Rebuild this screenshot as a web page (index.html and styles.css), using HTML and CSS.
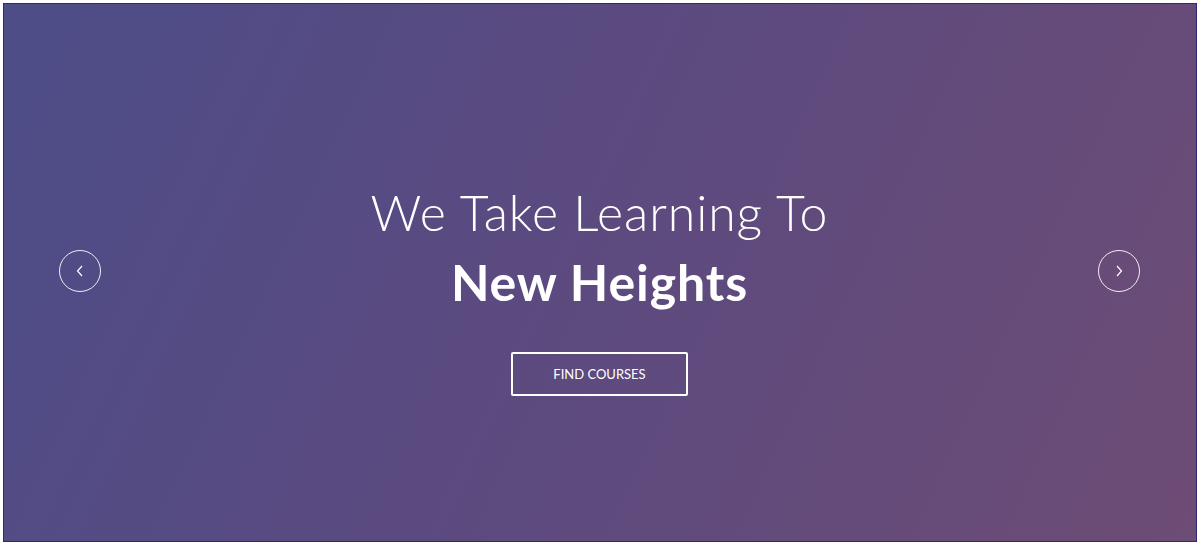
FILE: index.html
```html
<!DOCTYPE html>
<html lang="en">
<head>
<meta charset="utf-8">
<title>We Take Learning To New Heights</title>
<link rel="stylesheet" href="styles.css">
</head>
<body>
<section class="hero">
  <button class="arrow arrow-prev" aria-label="Previous">
    <svg width="10" height="12" viewBox="0 0 10 12"><path d="M7 1 L2.5 6 L7 11" fill="none" stroke="#fff" stroke-width="1.2"/></svg>
  </button>
  <div class="content">
    <h1 class="title"><span class="light">We Take Learning To</span><span class="bold">New Heights</span></h1>
    <a class="btn" href="#">FIND COURSES</a>
  </div>
  <button class="arrow arrow-next" aria-label="Next">
    <svg width="10" height="12" viewBox="0 0 10 12"><path d="M3 1 L7.5 6 L3 11" fill="none" stroke="#fff" stroke-width="1.2"/></svg>
  </button>
</section>
</body>
</html>
```
FILE: styles.css
```css
html, body {
  margin: 0;
  padding: 0;
  background: #fff;
}
body {
  padding: 3px 3px 4px 3px;
  font-family: "Lato", "Noto Sans", sans-serif;
}
.hero {
  box-sizing: border-box;
  height: 539px;
  border: 1px solid rgba(20, 10, 90, 0.55);
  background: linear-gradient(115deg, #4d4d88 0%, #5b4a80 45%, #6d4c75 100%);
  display: flex;
  align-items: center;
  justify-content: space-between;
  padding: 0 56px 0 55px;
}
.arrow {
  width: 42px;
  height: 42px;
  border-radius: 50%;
  border: 1px solid rgba(255, 255, 255, 0.9);
  background: transparent;
  display: flex;
  align-items: center;
  justify-content: center;
  padding: 0;
  margin-bottom: 3px;
  cursor: pointer;
}
.content {
  display: flex;
  flex-direction: column;
  align-items: center;
  margin-top: 27px;
}
.title {
  margin: 0;
  color: #fff;
  font-size: 50px;
  line-height: 70px;
  letter-spacing: 0.9px;
  text-align: center;
  display: flex;
  flex-direction: column;
}
.light {
  font-weight: 300;
}
.bold {
  font-weight: 700;
}
.btn {
  margin-top: 35px;
  box-sizing: border-box;
  width: 177px;
  height: 44px;
  border: 2px solid #fff;
  border-radius: 2px;
  color: #fff;
  text-decoration: none;
  font-size: 13px;
  display: flex;
  align-items: center;
  justify-content: center;
}
```
